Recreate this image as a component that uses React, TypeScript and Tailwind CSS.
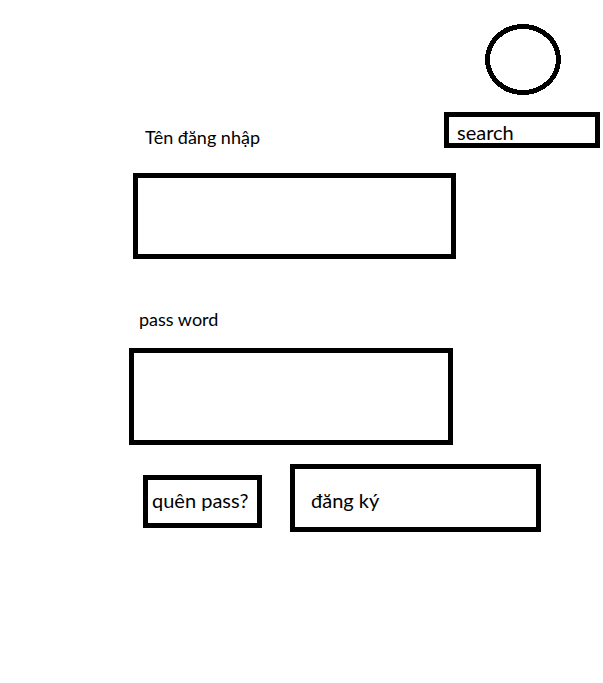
export default function App() {
  return (
    <main className="min-h-screen bg-white pt-6 pr-[3px] font-['Lato','Noto_Sans',sans-serif] text-lg leading-6 text-black">
      <header className="flex flex-col items-end">
        <svg className="mr-[39px] h-[71px] w-[76px]" viewBox="0 0 76 71" fill="none" stroke="black" strokeWidth="5" shapeRendering="crispEdges" aria-hidden="true">
          <ellipse cx="38" cy="35.5" rx="35.5" ry="33" />
        </svg>
        <input aria-label="search" placeholder="search" className="mt-[17px] h-9 w-[156px] border-[5px] border-black px-2 pt-1 text-xl leading-5 outline-none placeholder:text-black" />
      </header>
      <form className="-mt-[23px] pl-[129px]">
        <div className="flex w-[327px] flex-col pl-1">
          <label htmlFor="username" className="self-start pl-3">Tên đăng nhập</label>
          <input id="username" className="mt-6 h-[86px] w-full border-[5px] border-black px-4 outline-none" />
        </div>
        <div className="mt-12 flex w-[324px] flex-col">
          <label htmlFor="password" className="self-start pl-[10px]">pass word</label>
          <input id="password" type="password" className="mt-[17px] h-[97px] w-full border-[5px] border-black px-4 outline-none" />
        </div>
        <div className="mt-[19px] flex items-end gap-7 pl-[14px] text-xl leading-6">
          <button type="button" className="mb-1 h-[53px] w-[119px] border-[5px] border-black pb-1 pl-1 text-left whitespace-nowrap">quên pass?</button>
          <button type="submit" className="h-[68px] w-[251px] border-[5px] border-black pt-1 pl-4 text-left">đăng ký</button>
        </div>
      </form>
    </main>
  );
}
